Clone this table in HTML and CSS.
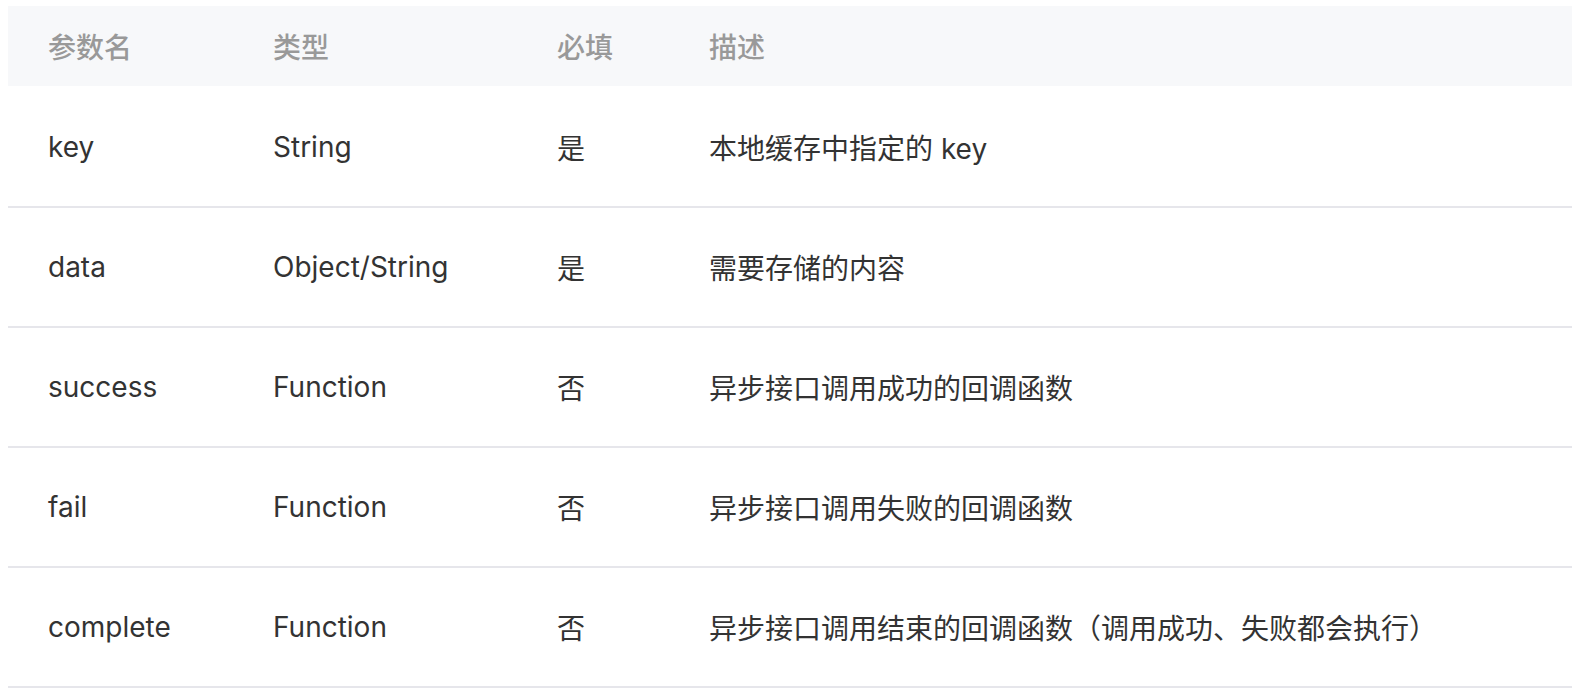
FILE: index.html
```html
<!DOCTYPE html>
<html lang="zh-CN">
<head>
<meta charset="utf-8">
<title>参数</title>
<link rel="stylesheet" href="styles.css">
</head>
<body>
<table class="params">
  <thead>
    <tr><th class="c1">参数名</th><th class="c2">类型</th><th class="c3">必填</th><th class="c4">描述</th></tr>
  </thead>
  <tbody>
    <tr><td>key</td><td>String</td><td>是</td><td>本地缓存中指定的 key</td></tr>
    <tr><td>data</td><td>Object/String</td><td>是</td><td>需要存储的内容</td></tr>
    <tr><td>success</td><td>Function</td><td>否</td><td>异步接口调用成功的回调函数</td></tr>
    <tr><td>fail</td><td>Function</td><td>否</td><td>异步接口调用失败的回调函数</td></tr>
    <tr><td>complete</td><td>Function</td><td>否</td><td>异步接口调用结束的回调函数（调用成功、失败都会执行）</td></tr>
  </tbody>
</table>
</body>
</html>
```
FILE: styles.css
```css
html, body { background: #ffffff; }
body {
  margin: 6px 8px 0 8px;
  font-family: Inter, "Noto Sans CJK SC", sans-serif;
  font-size: 28px;
  color: #333333;
}
.params {
  width: 100%;
  border-collapse: collapse;
  table-layout: fixed;
}
.params th, .params td {
  padding: 0 0 0 40px;
  text-align: left;
  vertical-align: middle;
  white-space: nowrap;
}
.params th {
  height: 80px;
  background: #f7f8fa;
  background-clip: padding-box;
  border-bottom: 2px solid #ffffff;
  color: #999999;
  font-weight: 500;
}
.params td {
  height: 118px;
  border-bottom: 2px solid #e6e6eb;
}
.c1 { width: 185px; }
.c2 { width: 244px; }
.c3 { width: 112px; }
```
